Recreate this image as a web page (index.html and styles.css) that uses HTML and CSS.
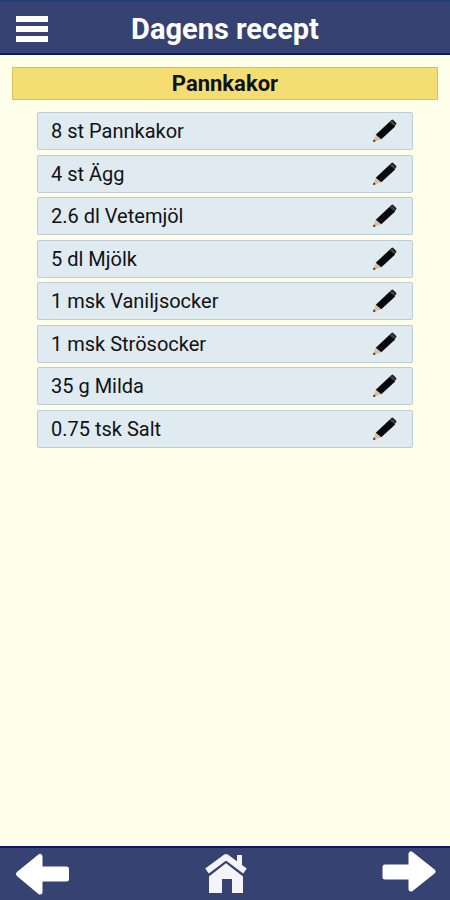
FILE: index.html
```
<!DOCTYPE html>
<html lang="sv">
<head>
    <meta charset="UTF-8">
    <meta name="viewport" content="width=device-width, initial-scale=1.0">
    <title>Dagens recept</title>
    <link rel="stylesheet" href="styles.css">
</head>
<body>
    <!-- Shared pencil icon -->
    <svg class="symbols" aria-hidden="true">
        <symbol id="pencil" viewBox="0 0 26 26">
            <path d="M0 25 L3 17 L9 22 Z" fill="#e2bd98"/>
            <path d="M0 25 L1 22 L3 24 Z" fill="#222"/>
            <path d="M3 17 L18 3 L24 8 L9 22 Z" fill="#08090c"/>
            <path d="M18 3 L20 1 Q21 0 22 1 L25 4 Q26 5 25 6 L23 8 Z" fill="#23252a"/>
            <path d="M20 3 L23 6" stroke="#777b80" stroke-width="1"/>
        </symbol>
    </svg>

    <header class="top-bar">
        <button class="menu-button" type="button" aria-label="Meny">
            <svg viewBox="0 0 32 28" width="32" height="28">
                <path d="M0 1h32v6H0zM0 11h32v6H0zM0 21h32v6H0z" fill="#fff"/>
            </svg>
        </button>
        <h1>Dagens recept</h1>
    </header>

    <main>
        <h2 class="recipe-name">Pannkakor</h2>
        <ul class="ingredients">
            <li><span>8 st Pannkakor</span><button type="button" aria-label="Ändra Pannkakor"><svg><use href="#pencil"/></svg></button></li>
            <li><span>4 st Ägg</span><button type="button" aria-label="Ändra Ägg"><svg><use href="#pencil"/></svg></button></li>
            <li><span>2.6 dl Vetemjöl</span><button type="button" aria-label="Ändra Vetemjöl"><svg><use href="#pencil"/></svg></button></li>
            <li><span>5 dl Mjölk</span><button type="button" aria-label="Ändra Mjölk"><svg><use href="#pencil"/></svg></button></li>
            <li><span>1 msk Vaniljsocker</span><button type="button" aria-label="Ändra Vaniljsocker"><svg><use href="#pencil"/></svg></button></li>
            <li><span>1 msk Strösocker</span><button type="button" aria-label="Ändra Strösocker"><svg><use href="#pencil"/></svg></button></li>
            <li><span>35 g Milda</span><button type="button" aria-label="Ändra Milda"><svg><use href="#pencil"/></svg></button></li>
            <li><span>0.75 tsk Salt</span><button type="button" aria-label="Ändra Salt"><svg><use href="#pencil"/></svg></button></li>
        </ul>
    </main>

    <nav class="bottom-bar">
        <button type="button" aria-label="Föregående">
            <svg viewBox="0 0 56 46" width="56" height="46">
                <path d="M4.500 23 L26 5.500 V18 H52.500 V28 H26 V41 Z" fill="#fff" stroke="#fff" stroke-width="5" stroke-linejoin="round"/>
            </svg>
        </button>
        <button type="button" aria-label="Hem">
            <svg viewBox="0 0 44 46" width="44" height="46">
                <path d="M34 4 H39 V18 L34 14 Z" fill="#f4f4fa"/>
                <path d="M4 20 L23 6 L42 20" fill="none" stroke="#f4f4fa" stroke-width="6" stroke-linejoin="round"/>
                <path d="M6 24 L23 11 L40 24 V42 H29 V28 H19 V42 H6 Z" fill="#f4f4fa"/>
                <path d="M5 25 L23 11 L41 25" fill="none" stroke="#364272" stroke-width="2"/>
            </svg>
        </button>
        <button type="button" aria-label="Nästa">
            <svg viewBox="0 0 56 46" width="56" height="46">
                <path d="M53 20.500 L31 3 V16 H5 V26 H31 V38 Z" fill="#fff" stroke="#fff" stroke-width="5" stroke-linejoin="round"/>
            </svg>
        </button>
    </nav>
</body>
</html>
```
FILE: styles.css
```
* {
    box-sizing: border-box;
}

body {
    margin: 0;
    min-height: 100vh;
    display: flex;
    flex-direction: column;
    font-family: Roboto, "Liberation Sans", sans-serif;
    background-color: #fdffe8;
    color: #101216;
}

button {
    padding: 0;
    border: none;
    background: none;
    cursor: pointer;
}

svg {
    display: block;
}

.symbols {
    display: none;
}

.top-bar {
    display: grid;
    grid-template-columns: 32px 1fr 32px;
    align-items: center;
    height: 55px;
    padding: 2px 16px 0;
    background-color: #364272;
    border-top: 2px solid #1f3d78;
    border-bottom: 2px solid #0a1866;
}

.top-bar h1 {
    margin: 0;
    font-size: 29px;
    line-height: 32px;
    font-weight: bold;
    text-align: center;
    color: #fff;
}

main {
    flex: 1;
    padding: 12px;
}

.recipe-name {
    margin: 0 0 12px;
    padding-top: 1px;
    font-size: 22px;
    line-height: 30px;
    text-align: center;
    background-color: #f4de74;
    border: 1px solid #d9bf60;
}

.ingredients {
    display: grid;
    align-content: space-between;
    min-height: 336px;
    margin: 0 25px;
    padding: 0;
    list-style: none;
}

.ingredients li {
    display: flex;
    justify-content: space-between;
    align-items: center;
    padding: 6px 15px 6px 13px;
    font-size: 20px;
    line-height: 24px;
    background-color: #e0eaf1;
    border: 1px solid #bccbd6;
    border-radius: 2px;
}

.ingredients svg {
    width: 24px;
    height: 24px;
}

.bottom-bar {
    display: flex;
    justify-content: space-between;
    align-items: center;
    height: 54px;
    padding: 0 14px;
    background-color: #364272;
    border-top: 2px solid #0a1866;
}
```
